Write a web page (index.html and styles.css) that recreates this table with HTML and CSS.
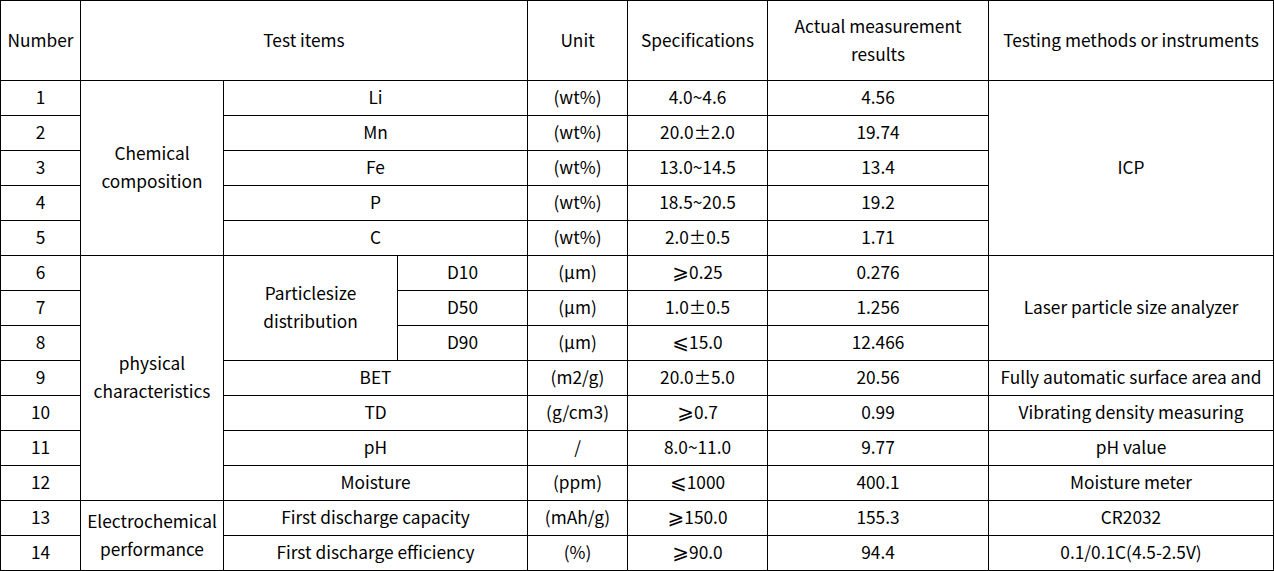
FILE: index.html
```html
<!DOCTYPE html>
<html lang="en">
<head>
<meta charset="utf-8">
<link rel="stylesheet" href="styles.css">
</head>
<body>
<table class="spec">
<colgroup>
<col class="c1"><col class="c2"><col class="c3"><col class="c4"><col class="c5"><col class="c6"><col class="c7"><col class="c8">
</colgroup>
<tr class="head">
<td>Number</td>
<td colspan="3">Test items</td>
<td>Unit</td>
<td>Specifications</td>
<td>Actual measurement<br>results</td>
<td>Testing methods or instruments</td>
</tr>
<tr><td>1</td><td rowspan="5">Chemical<br>composition</td><td colspan="2">Li</td><td>(wt%)</td><td>4.0~4.6</td><td>4.56</td><td rowspan="5">ICP</td></tr>
<tr><td>2</td><td colspan="2">Mn</td><td>(wt%)</td><td>20.0±2.0</td><td>19.74</td></tr>
<tr><td>3</td><td colspan="2">Fe</td><td>(wt%)</td><td>13.0~14.5</td><td>13.4</td></tr>
<tr><td>4</td><td colspan="2">P</td><td>(wt%)</td><td>18.5~20.5</td><td>19.2</td></tr>
<tr><td>5</td><td colspan="2">C</td><td>(wt%)</td><td>2.0±0.5</td><td>1.71</td></tr>
<tr><td>6</td><td rowspan="7">physical<br>characteristics</td><td rowspan="3">Particlesize<br>distribution</td><td>D10</td><td>(μm)</td><td><span class="sym">⩾</span>0.25</td><td>0.276</td><td rowspan="3">Laser particle size analyzer</td></tr>
<tr><td>7</td><td>D50</td><td>(μm)</td><td>1.0±0.5</td><td>1.256</td></tr>
<tr><td>8</td><td>D90</td><td>(μm)</td><td><span class="sym">⩽</span>15.0</td><td>12.466</td></tr>
<tr><td>9</td><td colspan="2">BET</td><td>(m2/g)</td><td>20.0±5.0</td><td>20.56</td><td>Fully automatic surface area and</td></tr>
<tr><td>10</td><td colspan="2">TD</td><td>(g/cm3)</td><td><span class="sym">⩾</span>0.7</td><td>0.99</td><td>Vibrating density measuring</td></tr>
<tr><td>11</td><td colspan="2">pH</td><td>/</td><td>8.0~11.0</td><td>9.77</td><td>pH value</td></tr>
<tr><td>12</td><td colspan="2">Moisture</td><td>(ppm)</td><td><span class="sym">⩽</span>1000</td><td>400.1</td><td>Moisture meter</td></tr>
<tr><td>13</td><td rowspan="2">Electrochemical<br>performance</td><td colspan="2">First discharge capacity</td><td>(mAh/g)</td><td><span class="sym">⩾</span>150.0</td><td>155.3</td><td>CR2032</td></tr>
<tr><td>14</td><td colspan="2">First discharge efficiency</td><td>(%)</td><td><span class="sym">⩾</span>90.0</td><td>94.4</td><td>0.1/0.1C(4.5-2.5V)</td></tr>
</table>
</body>
</html>
```
FILE: styles.css
```css
html, body {
  margin: 0;
  padding: 0;
  background: #fff;
}
body {
  font-family: "Noto Sans CJK SC", "Noto Sans", sans-serif;
  font-size: 17.3px;
  color: #000;
}
.spec {
  border-collapse: collapse;
  table-layout: fixed;
  width: 1273px;
}
.spec td {
  border: 1px solid #000;
  text-align: center;
  vertical-align: middle;
  padding: 0 0 2px 0;
  height: 32px;
  line-height: 28px;
  white-space: nowrap;
  overflow: hidden;
}
.spec tr.head td {
  height: 77px;
}
.sym {
  font-family: "DejaVu Sans", sans-serif;
  font-size: 20px;
  line-height: 1;
}
.c1 { width: 80px; }
.c2 { width: 143px; }
.c3 { width: 174px; }
.c4 { width: 130px; }
.c5 { width: 100px; }
.c6 { width: 140px; }
.c7 { width: 221px; }
.c8 { width: 285px; }
```
